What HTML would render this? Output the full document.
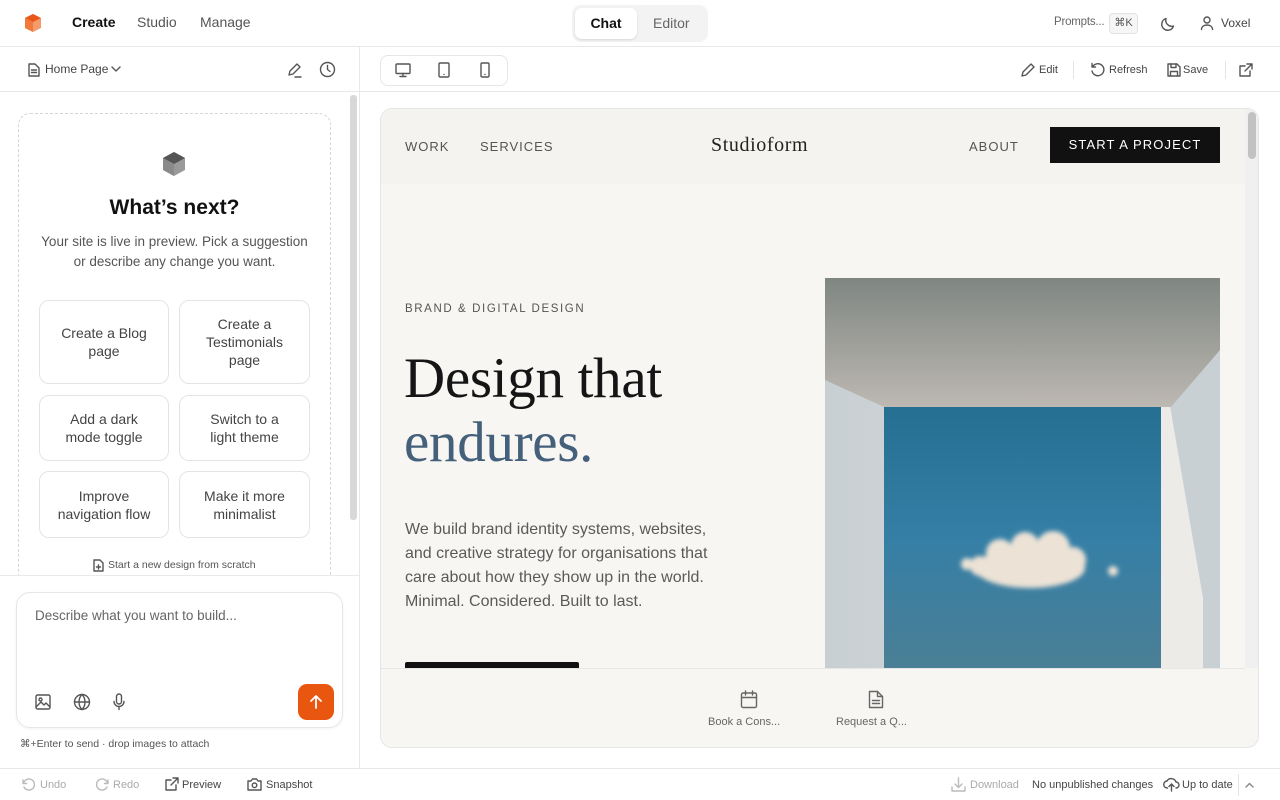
<!DOCTYPE html>
<html><head><meta charset="utf-8"><style>
*{box-sizing:border-box;margin:0;padding:0}
body{width:1280px;height:800px;overflow:hidden;background:#fff;font-family:"Liberation Sans",sans-serif;color:#333;position:relative}
.a{position:absolute}
.ic{fill:none;stroke:#555;stroke-width:1.4;stroke-linecap:round;stroke-linejoin:round}
.btn{position:absolute;border:1px solid #e4e4e4;border-radius:10px;background:#fff;display:flex;align-items:center;justify-content:center;text-align:center;font-size:14px;line-height:18px;color:#444}
</style></head><body>
<!-- top bar -->
<div class="a" style="left:0;top:0;width:1280px;height:47px;border-bottom:1px solid #e8e8e8"></div>
<svg class="a" style="top:13px;left:23px" width="20" height="20" viewBox="0 0 20 20"><polygon points="10,1 18,5 18,15 10,19 2,15 2,5" fill="#f59a6a"/><polygon points="10,1 18,5 10,9 2,5" fill="#e8561a"/><polygon points="2,5 10,9 10,19 2,15" fill="#f07a3c"/></svg>
<div class="a" style="left:72px;top:14px;font-size:14px;color:#111;font-weight:bold">Create</div>
<div class="a" style="left:137px;top:14px;font-size:14px;color:#555">Studio</div>
<div class="a" style="left:200px;top:14px;font-size:14px;color:#555">Manage</div>
<div class="a" style="left:572px;top:5px;width:136px;height:37px;background:#f3f3f3;border-radius:9px"></div>
<div class="a" style="left:575px;top:8px;width:62px;height:31px;background:#fff;border-radius:7px;box-shadow:0 1px 2px rgba(0,0,0,.12);font-size:14px;font-weight:bold;color:#111;text-align:center;line-height:31px">Chat</div>
<div class="a" style="left:653px;top:15px;font-size:14px;color:#666">Editor</div>
<div class="a" style="left:1054px;top:16px;font-size:11.5px;color:#666;letter-spacing:-.2px">Prompts...</div>
<div class="a" style="left:1109px;top:13px;width:29px;height:21px;border:1px solid #e2e2e2;background:#f6f6f6;border-radius:4px;font-size:11px;color:#555;text-align:center;line-height:19px">⌘K</div>
<svg class="a ic" style="left:1159px;top:15px" width="18" height="18" viewBox="0 0 18 18"><path d="M14.5 11A6 6 0 0 1 7 3.5 6 6 0 1 0 14.5 11z"/></svg>
<svg class="a ic" style="left:1200px;top:15px" width="14" height="16" viewBox="0 0 14 16"><circle cx="7" cy="5" r="3"/><path d="M1.5 14.5c0-3 2.5-4.5 5.5-4.5s5.5 1.5 5.5 4.5"/></svg>
<div class="a" style="left:1221px;top:16px;font-size:12px;color:#444">Voxel</div>

<!-- left panel -->
<div class="a" style="left:359px;top:47px;width:1px;height:721px;background:#e8e8e8"></div>
<div class="a" style="left:0;top:91px;width:359px;height:1px;background:#e8e8e8"></div>
<svg class="a ic" style="left:28px;top:63px" width="12" height="14" viewBox="0 0 12 14" stroke-width="1.1"><path d="M1 1h6l4 4v8H1z"/><path d="M3.5 7h5M3.5 9.5h5"/></svg>
<div class="a" style="left:45px;top:62px;font-size:12px;color:#444">Home Page</div>
<svg class="a ic" style="left:111px;top:66px" width="10" height="6" viewBox="0 0 10 6"><path d="M1 1l4 4 4-4"/></svg>
<svg class="a ic" style="left:287px;top:62px" width="16" height="16" viewBox="0 0 16 16" stroke-width="1.2"><path d="M2 13l1-4 7-7 3 3-7 7zM8 15h6"/></svg>
<svg class="a ic" style="left:319px;top:61px" width="17" height="17" viewBox="0 0 17 17" stroke-width="1.2"><circle cx="8.5" cy="8.5" r="7"/><path d="M8.5 4.5v4l2.5 2"/></svg>
<div class="a" style="left:350px;top:95px;width:7px;height:425px;background:#d8d8d8;border-radius:3px"></div>
<div class="a" style="left:18px;top:113px;width:313px;height:480px;border:1px dashed #d6d6d6;border-radius:12px"></div>
<div class="a" style="left:0;top:575px;width:359px;height:193px;background:#fff;border-top:1px solid #eaeaea"></div>
<svg class="a" style="left:162px;top:151px" width="24" height="26" viewBox="0 0 24 26"><polygon points="12,1 23,7 23,19 12,25 1,19 1,7" fill="#9a9a9a"/><polygon points="12,1 23,7 12,13 1,7" fill="#555"/><polygon points="1,7 12,13 12,25 1,19" fill="#8a8a8a"/></svg>
<div class="a" style="left:18px;top:196px;width:313px;text-align:center;font-size:21px;font-weight:bold;color:#111">What’s next?</div>
<div class="a" style="left:18px;top:232px;width:313px;text-align:center;font-size:13.5px;line-height:20px;color:#555">Your site is live in preview. Pick a suggestion<br>or describe any change you want.</div>
<div class="btn" style="left:39px;top:300px;width:130px;height:84px">Create a Blog<br>page</div>
<div class="btn" style="left:179px;top:300px;width:131px;height:84px">Create a<br>Testimonials<br>page</div>
<div class="btn" style="left:39px;top:395px;width:130px;height:66px">Add a dark<br>mode toggle</div>
<div class="btn" style="left:179px;top:395px;width:131px;height:66px">Switch to a<br>light theme</div>
<div class="btn" style="left:39px;top:471px;width:130px;height:67px">Improve<br>navigation flow</div>
<div class="btn" style="left:179px;top:471px;width:131px;height:67px">Make it more<br>minimalist</div>
<svg class="a ic" style="left:93px;top:559px" width="11" height="13" viewBox="0 0 11 13" stroke-width="1"><path d="M1 1h6l3 3v8H1z"/><path d="M5.5 6v4M3.5 8h4"/></svg>
<div class="a" style="left:108px;top:559px;font-size:10.5px;color:#555">Start a new design from scratch</div>
<div class="a" style="left:16px;top:592px;width:327px;height:136px;border:1px solid #e6e6e6;border-radius:14px;box-shadow:0 1px 3px rgba(0,0,0,.05)"></div>
<div class="a" style="left:35px;top:608px;font-size:13.5px;color:#666">Describe what you want to build...</div>
<svg class="a ic" style="left:35px;top:694px" width="16" height="16" viewBox="0 0 16 16" stroke-width="1.2"><rect x="1" y="1" width="14" height="14" rx="1.5"/><circle cx="5.5" cy="5.5" r="1.5"/><path d="M1 13l5-5 3 3 2-2 4 4"/></svg>
<svg class="a ic" style="left:73px;top:693px" width="18" height="18" viewBox="0 0 18 18" stroke-width="1.2"><circle cx="9" cy="9" r="7.5"/><path d="M1.5 9h15M9 1.5c-4 4-4 11 0 15M9 1.5c4 4 4 11 0 15"/></svg>
<svg class="a ic" style="left:113px;top:693px" width="12" height="18" viewBox="0 0 12 18" stroke-width="1.2"><rect x="3.5" y="1" width="5" height="10" rx="2.5"/><path d="M1 8.5a5 5 0 0 0 10 0M6 13.5v3"/></svg>
<div class="a" style="left:298px;top:684px;width:36px;height:36px;border-radius:9px;background:#e8560f"></div>
<svg class="a" style="left:308px;top:694px" width="16" height="16" viewBox="0 0 16 16" fill="none" stroke="#fff" stroke-width="1.8" stroke-linecap="round" stroke-linejoin="round"><path d="M8 14V2M3 7l5-5 5 5"/></svg>
<div class="a" style="left:20px;top:738px;font-size:10.5px;color:#555">⌘+Enter to send · drop images to attach</div>

<!-- bottom bar -->
<div class="a" style="left:0;top:768px;width:1280px;height:1px;background:#e8e8e8"></div>
<svg class="a ic" style="left:21px;top:777px;stroke:#bbb" width="15" height="15" viewBox="0 0 15 15" stroke-width="1.2"><path d="M2 3v3.5h3.5M2.5 6.5A5.5 5.5 0 1 1 3 10"/></svg>
<div class="a" style="left:40px;top:779px;font-size:11px;color:#aaa">Undo</div>
<svg class="a ic" style="left:95px;top:777px;stroke:#bbb" width="15" height="15" viewBox="0 0 15 15" stroke-width="1.2"><path d="M13 3v3.5H9.5M12.5 6.5A5.5 5.5 0 1 0 12 10"/></svg>
<div class="a" style="left:113px;top:779px;font-size:11px;color:#aaa">Redo</div>
<svg class="a ic" style="left:165px;top:777px" width="14" height="14" viewBox="0 0 14 14" stroke-width="1.2"><path d="M11 8v5H1V3h5M8 1h5v5M13 1L6 8"/></svg>
<div class="a" style="left:182px;top:779px;font-size:11px;color:#444">Preview</div>
<svg class="a ic" style="left:247px;top:778px" width="15" height="13" viewBox="0 0 15 13" stroke-width="1.2"><path d="M1 3h3l1.5-2h4L11 3h3v9H1z"/><circle cx="7.5" cy="7.3" r="2.3"/></svg>
<div class="a" style="left:266px;top:779px;font-size:11px;color:#444">Snapshot</div>
<svg class="a ic" style="left:951px;top:777px;stroke:#bbb" width="15" height="15" viewBox="0 0 15 15" stroke-width="1.2"><path d="M7.5 1v9M4 7l3.5 3.5L11 7M1 10v4h13v-4"/></svg>
<div class="a" style="left:970px;top:779px;font-size:11px;color:#aaa">Download</div>
<div class="a" style="left:1032px;top:779px;font-size:11px;color:#444">No unpublished changes</div>
<svg class="a ic" style="left:1163px;top:777px" width="17" height="15" viewBox="0 0 17 15" stroke-width="1.2"><path d="M4.5 11A3.5 3.5 0 0 1 4 4 5 5 0 0 1 13 5a3 3 0 0 1 0 6M8.5 14V7M6 9.5l2.5-2.5 2.5 2.5"/></svg>
<div class="a" style="left:1182px;top:779px;font-size:11px;color:#444">Up to date</div>
<div class="a" style="left:1238px;top:774px;width:1px;height:22px;background:#e4e4e4"></div>
<svg class="a ic" style="left:1245px;top:782px;stroke:#888" width="9" height="6" viewBox="0 0 9 6" stroke-width="1.1"><path d="M1 5l3.5-3.5L8 5"/></svg>

<!-- preview toolbar -->
<div class="a" style="left:360px;top:91px;width:920px;height:1px;background:#e8e8e8"></div>
<div class="a" style="left:380px;top:55px;width:128px;height:31px;border:1px solid #e6e6e6;border-radius:8px"></div>
<svg class="a ic" style="left:395px;top:63px" width="16" height="15" viewBox="0 0 16 15" stroke-width="1.2"><rect x="1" y="1" width="14" height="9.5" rx="1"/><path d="M8 10.5v3M5 13.5h6"/></svg>
<svg class="a ic" style="left:438px;top:62px" width="12" height="16" viewBox="0 0 12 16" stroke-width="1.1"><rect x="1" y="1" width="10" height="14" rx="1.2"/><path d="M6 12.5h.01"/></svg>
<svg class="a ic" style="left:480px;top:62px" width="10" height="16" viewBox="0 0 10 16" stroke-width="1.1"><rect x="1" y="1" width="8" height="14" rx="1.2"/><path d="M5 12.5h.01"/></svg>
<svg class="a ic" style="left:1020px;top:62px" width="16" height="16" viewBox="0 0 16 16" stroke-width="1.1"><path d="M2 14l1-4 8-8 3 3-8 8z"/></svg>
<div class="a" style="left:1039px;top:64px;font-size:11px;color:#444">Edit</div>
<div class="a" style="left:1073px;top:61px;width:1px;height:18px;background:#e4e4e4"></div>
<svg class="a ic" style="left:1090px;top:62px" width="15" height="15" viewBox="0 0 15 15" stroke-width="1.1"><path d="M2 1.5v3.5h3.5M2.5 5A6 6 0 1 1 2 9"/></svg>
<div class="a" style="left:1109px;top:64px;font-size:11px;color:#444">Refresh</div>
<svg class="a ic" style="left:1167px;top:63px" width="14" height="14" viewBox="0 0 14 14" stroke-width="1.1"><path d="M1 1h9l3 3v9H1z"/><path d="M4 1v3.5h5V1M3.5 13V8.5h7V13"/></svg>
<div class="a" style="left:1183px;top:64px;font-size:11px;color:#444">Save</div>
<div class="a" style="left:1225px;top:61px;width:1px;height:18px;background:#e4e4e4"></div>
<svg class="a ic" style="left:1239px;top:63px" width="14" height="14" viewBox="0 0 14 14" stroke-width="1.1"><path d="M11 8v5H1V3h5M8 1h5v5M13 1L6 8"/></svg>

<!-- preview card -->
<div class="a" style="left:380px;top:108px;width:879px;height:640px;border:1px solid #e6e6e6;border-radius:12px;background:#f7f6f3;overflow:hidden">
  <div class="a" style="left:0;top:0;width:864px;height:75px;background:#f4f3f0"></div>
  <div class="a" style="left:24px;top:30px;font-size:13px;letter-spacing:1px;color:#555">WORK</div>
  <div class="a" style="left:99px;top:30px;font-size:13px;letter-spacing:1px;color:#555">SERVICES</div>
  <div class="a" style="left:330px;top:25px;font-family:'Liberation Serif',serif;font-size:20px;letter-spacing:.6px;color:#222">Studioform</div>
  <div class="a" style="left:588px;top:30px;font-size:13px;letter-spacing:1px;color:#555">ABOUT</div>
  <div class="a" style="left:669px;top:18px;width:170px;height:36px;background:#111;color:#fff;font-size:13px;letter-spacing:1.1px;text-align:center;line-height:36px">START A PROJECT</div>
  <div class="a" style="left:24px;top:194px;font-size:11.5px;letter-spacing:1.6px;color:#555">BRAND &amp; DIGITAL DESIGN</div>
  <div class="a" style="left:23px;top:238px;font-family:'Liberation Serif',serif;font-size:57px;line-height:64px;color:#151515;letter-spacing:-.3px">Design that<br><span style="color:#45607a">endures.</span></div>
  <div class="a" style="left:24px;top:409px;font-size:16px;line-height:24px;color:#5a5a5a">We build brand identity systems, websites,<br>and creative strategy for organisations that<br>care about how they show up in the world.<br>Minimal. Considered. Built to last.</div>
  <div class="a" style="left:24px;top:553px;width:174px;height:10px;background:#111;border-radius:2px 2px 0 0"></div>
  <svg class="a" style="left:444px;top:169px" width="395" height="392" viewBox="0 0 395 392">
    <defs>
      <linearGradient id="cl" x1="0" y1="0" x2="0" y2="1"><stop offset="0" stop-color="#7f8682"/><stop offset="1" stop-color="#bdb8b2"/></linearGradient>
      <linearGradient id="sk" x1="0" y1="0" x2="0" y2="1"><stop offset="0" stop-color="#256f92"/><stop offset=".5" stop-color="#357fa6"/><stop offset="1" stop-color="#4b7f95"/></linearGradient>
      <linearGradient id="lw" x1="0" y1="0" x2="1" y2="0"><stop offset="0" stop-color="#c8cfd3"/><stop offset="1" stop-color="#dfe2e2"/></linearGradient>
      <filter id="bl"><feGaussianBlur stdDeviation="2.5"/></filter>
    </defs>
    <rect width="395" height="392" fill="url(#lw)"/>
    <rect x="335" y="70" width="60" height="322" fill="#c9d0d4"/>
    <polygon points="336,128 345,128 378,320 378,392 336,392" fill="#ecebe8"/>
    <rect x="59" y="129" width="277" height="263" fill="url(#sk)"/>
    <polygon points="0,0 395,0 395,72 346,129 59,129 0,102" fill="url(#cl)"/>
    <g filter="url(#bl)" fill="#ece2d6">
      <ellipse cx="205" cy="290" rx="55" ry="20"/>
      <circle cx="175" cy="275" r="14"/><circle cx="200" cy="268" r="14"/><circle cx="228" cy="270" r="17"/><circle cx="248" cy="282" r="13"/>
      <circle cx="155" cy="288" r="10"/><circle cx="142" cy="286" r="6"/>
      <circle cx="288" cy="293" r="5"/>
    </g>
  </svg>
  <div class="a" style="left:0;top:559px;width:864px;height:81px;background:#f7f6f3;border-top:1px solid #e6e6e6"></div>
  <svg class="a ic" style="left:359px;top:581px;stroke:#666" width="18" height="19" viewBox="0 0 18 19" stroke-width="1.2"><rect x="1.5" y="3" width="15" height="14.5" rx="1.5"/><path d="M1.5 7.5h15M5.5 1v4M12.5 1v4"/></svg>
  <div class="a" style="left:327px;top:607px;font-size:11px;color:#666">Book a Cons...</div>
  <svg class="a ic" style="left:487px;top:581px;stroke:#666" width="16" height="19" viewBox="0 0 16 19" stroke-width="1.2"><path d="M1.5 1.5h8l5 5v11h-13z"/><path d="M9.5 1.5v5h5M4.5 10.5h7M4.5 13.5h7"/></svg>
  <div class="a" style="left:455px;top:607px;font-size:11px;color:#666">Request a Q...</div>
  <div class="a" style="left:864px;top:0;width:15px;height:559px;background:#f0f0f0"></div>
  <div class="a" style="left:867px;top:3px;width:8px;height:47px;background:#c2c2c2;border-radius:4px"></div>
</div>
</body></html>
